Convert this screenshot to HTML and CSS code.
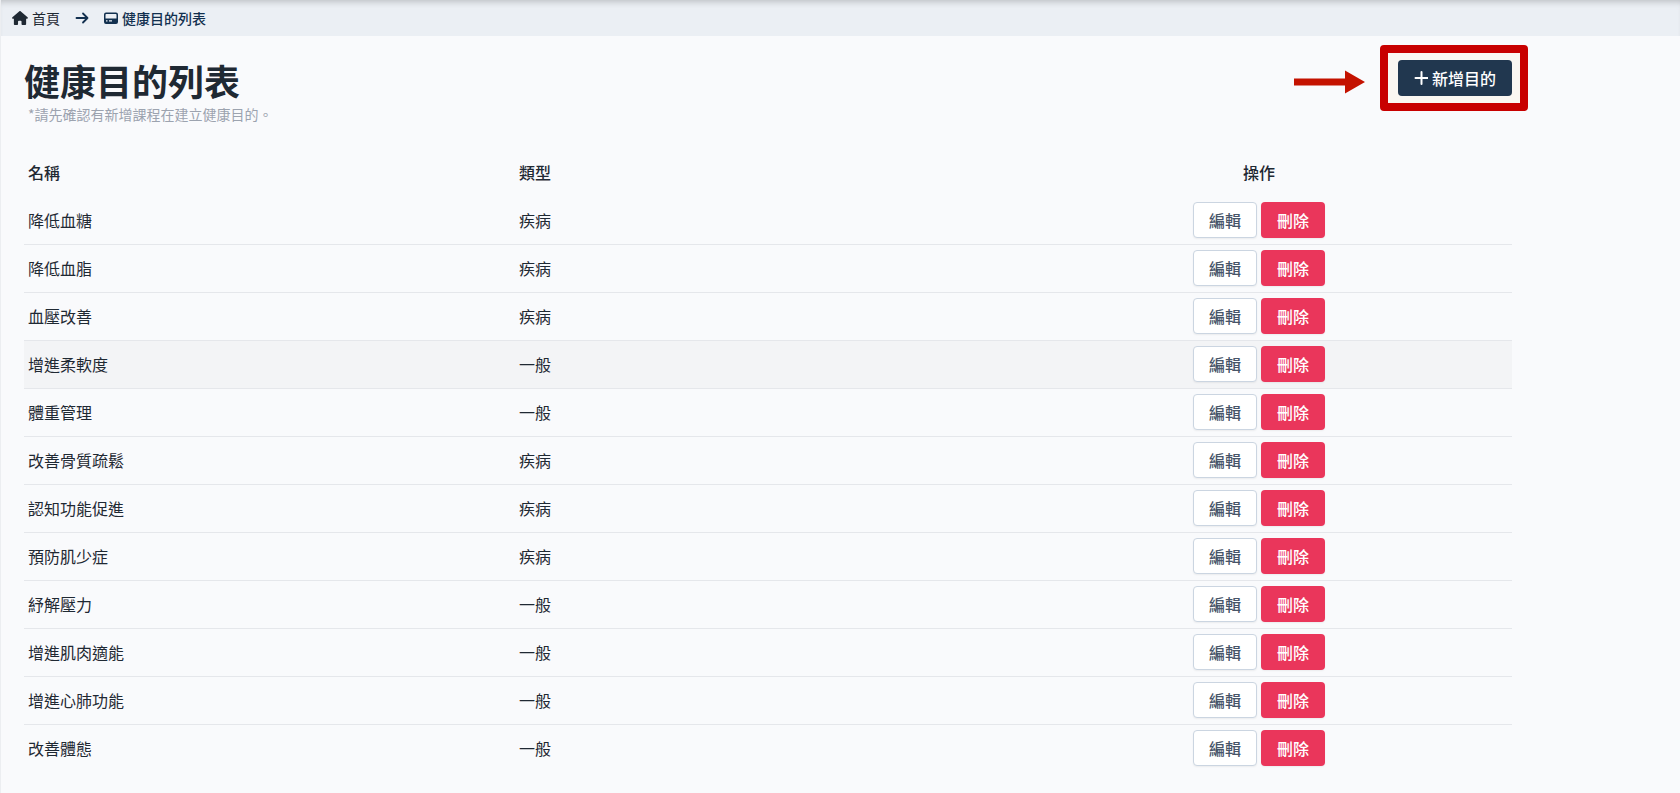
FILE: index.html
```html
<!DOCTYPE html>
<html lang="zh-Hant">
<head>
<meta charset="utf-8">
<meta name="viewport" content="width=device-width, initial-scale=1">
<title>健康目的列表</title>
<link rel="stylesheet" href="styles.css">
</head>
<body>
<nav class="breadcrumb" aria-label="breadcrumb">
  <a class="crumb" href="#">
    <svg class="icon" viewBox="0 0 576 512" aria-hidden="true"><path fill="currentColor" d="M575.800 255.500c0 18-15 32.100-32 32.100h-32l.7 160.200c0 2.700-.2 5.400-.5 8.100V472c0 22.100-17.900 40-40 40h-88c-22.100 0-40-17.900-40-40v-88c0-17.700-14.300-32-32-32h-64c-17.700 0-32 14.300-32 32v88c0 22.100-17.900 40-40 40h-72c-22.100 0-40-17.900-40-40V287.600H32c-18 0-32-14-32-32.100 0-9 3-17 10-24L266.400 8c7-7 15-8 22-8s15 2 21 7l255.400 224.500c8 7 12 15 11 24z"/></svg>
    首頁
  </a>
  <svg class="icon crumb-arrow" viewBox="0 0 14 14" aria-hidden="true"><path fill="none" stroke="currentColor" stroke-width="1.800" stroke-linecap="round" stroke-linejoin="round" d="M1.500 7h11M8 2.500 12.500 7 8 11.500"/></svg>
  <a class="crumb crumb-current" href="#" aria-current="page">
    <svg class="icon" viewBox="0 0 14 14" aria-hidden="true"><path fill="currentColor" fill-rule="evenodd" d="M2 1.500h10a2 2 0 0 1 2 2V11a2 2 0 0 1-2 2H2a2 2 0 0 1-2-2V3.500a2 2 0 0 1 2-2zM2.200 3a.7.700 0 0 0-.7.700v3.800h11V3.700a.7.700 0 0 0-.7-.7zM2 9.300v1.200h1.500V9.300zM5 9.300v1.200h3V9.300z"/></svg>
    健康目的列表
  </a>
</nav>
<main class="page">
  <header class="page-head">
    <div>
      <h1 class="title">健康目的列表</h1>
      <p class="hint">*請先確認有新增課程在建立健康目的。</p>
    </div>
    <div class="callout">
      <svg class="callout-arrow" viewBox="0 0 71 24" aria-hidden="true"><path fill="#c41200" d="M0 8.500h51V.5L71 12 51 23.500v-8H0z"/></svg>
      <span class="callout-frame"></span>
      <button class="btn btn-add" type="button">
        <svg class="icon" viewBox="0 0 14 14" aria-hidden="true"><path fill="none" stroke="currentColor" stroke-width="2" stroke-linecap="round" d="M7.500 1v12M1.500 7h12"/></svg>
        新增目的
      </button>
    </div>
  </header>
  <table class="goals">
    <thead>
      <tr><th>名稱</th><th>類型</th><th class="actions">操作</th></tr>
    </thead>
    <tbody>
      <tr><td>降低血糖</td><td>疾病</td><td class="actions"><div class="btns"><button class="btn btn-edit" type="button">編輯</button><button class="btn btn-delete" type="button">刪除</button></div></td></tr>
      <tr><td>降低血脂</td><td>疾病</td><td class="actions"><div class="btns"><button class="btn btn-edit" type="button">編輯</button><button class="btn btn-delete" type="button">刪除</button></div></td></tr>
      <tr><td>血壓改善</td><td>疾病</td><td class="actions"><div class="btns"><button class="btn btn-edit" type="button">編輯</button><button class="btn btn-delete" type="button">刪除</button></div></td></tr>
      <tr class="active"><td>增進柔軟度</td><td>一般</td><td class="actions"><div class="btns"><button class="btn btn-edit" type="button">編輯</button><button class="btn btn-delete" type="button">刪除</button></div></td></tr>
      <tr><td>體重管理</td><td>一般</td><td class="actions"><div class="btns"><button class="btn btn-edit" type="button">編輯</button><button class="btn btn-delete" type="button">刪除</button></div></td></tr>
      <tr><td>改善骨質疏鬆</td><td>疾病</td><td class="actions"><div class="btns"><button class="btn btn-edit" type="button">編輯</button><button class="btn btn-delete" type="button">刪除</button></div></td></tr>
      <tr><td>認知功能促進</td><td>疾病</td><td class="actions"><div class="btns"><button class="btn btn-edit" type="button">編輯</button><button class="btn btn-delete" type="button">刪除</button></div></td></tr>
      <tr><td>預防肌少症</td><td>疾病</td><td class="actions"><div class="btns"><button class="btn btn-edit" type="button">編輯</button><button class="btn btn-delete" type="button">刪除</button></div></td></tr>
      <tr><td>紓解壓力</td><td>一般</td><td class="actions"><div class="btns"><button class="btn btn-edit" type="button">編輯</button><button class="btn btn-delete" type="button">刪除</button></div></td></tr>
      <tr><td>增進肌肉適能</td><td>一般</td><td class="actions"><div class="btns"><button class="btn btn-edit" type="button">編輯</button><button class="btn btn-delete" type="button">刪除</button></div></td></tr>
      <tr><td>增進心肺功能</td><td>一般</td><td class="actions"><div class="btns"><button class="btn btn-edit" type="button">編輯</button><button class="btn btn-delete" type="button">刪除</button></div></td></tr>
      <tr><td>改善體態</td><td>一般</td><td class="actions"><div class="btns"><button class="btn btn-edit" type="button">編輯</button><button class="btn btn-delete" type="button">刪除</button></div></td></tr>
    </tbody>
  </table>
</main>
</body>
</html>
```
FILE: styles.css
```css
* {
  box-sizing: border-box;
}

body {
  margin: 0;
  min-height: 100vh;
  border-left: 1px solid #eceef1;
  background: #f9fafc;
  color: #1f2933;
  font: 16px/24px "Noto Sans CJK TC", sans-serif;
}

.icon {
  flex: none;
  width: 14px;
  height: 14px;
}

.breadcrumb {
  display: flex;
  align-items: center;
  gap: 15px;
  height: 36px;
  padding: 0 11px;
  background: #ebeff4;
  box-shadow: inset 0 6px 6px -4px rgba(0, 0, 0, 0.2);
  font-size: 14px;
  line-height: 20px;
}

.crumb {
  display: flex;
  align-items: center;
  gap: 4px;
  color: #1f2933;
  text-decoration: none;
}

.crumb .icon {
  width: 16px;
}

.crumb-arrow,
.crumb-current {
  color: #12304f;
}

.crumb-current {
  font-weight: 500;
}

.crumb-current .icon {
  width: 14px;
}

.page {
  width: 90%;
  padding: 24px 0 24px 23px;
}

.page-head {
  display: flex;
  align-items: flex-start;
  justify-content: space-between;
}

.title {
  margin: 0 0 4px;
  font-size: 36px;
  line-height: 40px;
}

.hint {
  margin: 0 0 24px;
  padding-left: 4px;
  color: #9ca3af;
  font-size: 14px;
  line-height: 20px;
}

.btn {
  display: inline-flex;
  align-items: center;
  justify-content: center;
  gap: 4px;
  height: 36px;
  padding: 0 15px;
  border: 1px solid transparent;
  border-radius: 4px;
  font: inherit;
  font-weight: 500;
}

.callout {
  position: relative;
}

.callout .btn {
  position: relative;
}

.callout-frame {
  position: absolute;
  inset: -15px -16px -15px -18px;
  border: 8px solid #c80000;
  border-radius: 4px;
  background: #faf7f2;
}

.callout-arrow {
  position: absolute;
  top: 10px;
  right: 147px;
  width: 71px;
  height: 24px;
}

.btn-add {
  background: #21374f;
  color: #fff;
}

.btn-edit {
  border-color: #cbd5e1;
  background: #fff;
  color: #475569;
  box-shadow: 0 1px 2px rgba(0, 0, 0, 0.06);
}

.btn-delete {
  background: #ea365b;
  color: #fff;
  box-shadow: 0 1px 2px rgba(0, 0, 0, 0.06);
}

.goals {
  width: 100%;
  border-collapse: separate;
  border-spacing: 0;
  table-layout: fixed;
}

.goals th,
.goals td {
  height: 48px;
  padding: 0 4px;
  text-align: left;
}

.goals th {
  font-weight: 500;
}

.goals td {
  padding-bottom: 1px;
}

.goals tr + tr td {
  border-top: 1px solid #e5e7eb;
}

.goals th:not(.actions) {
  width: 33%;
}

.goals .actions {
  text-align: center;
}

.btns {
  display: flex;
  justify-content: center;
  gap: 4px;
}

.active {
  background: #f3f4f6;
}
```
